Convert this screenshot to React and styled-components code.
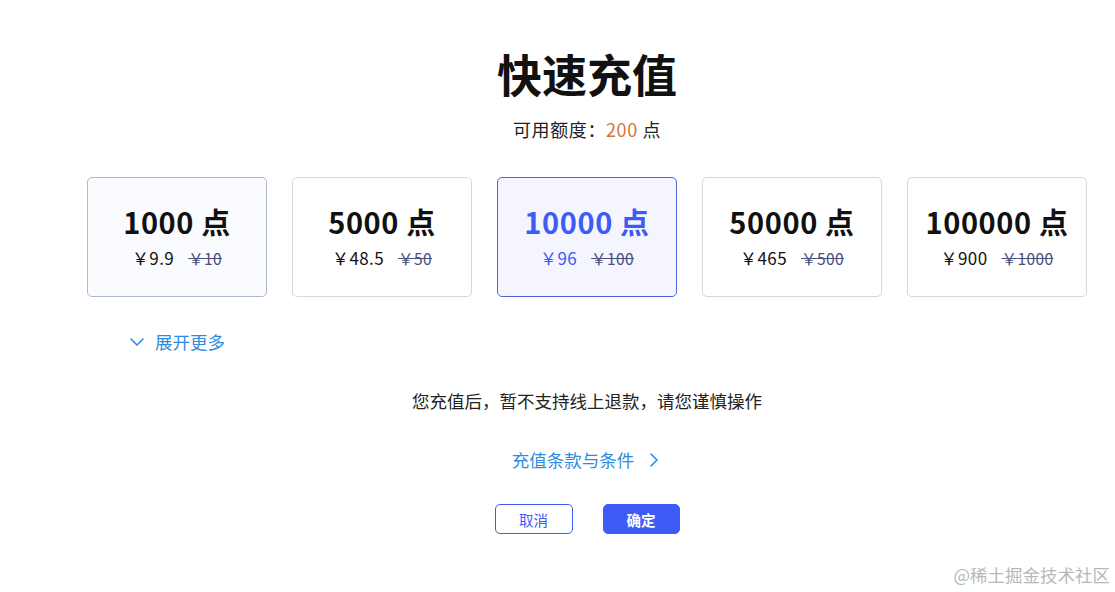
import React, { useState } from 'react'
import styled, { createGlobalStyle } from 'styled-components'

const GlobalStyle = createGlobalStyle`
  body {
    margin: 0;
    background: #fff;
    font-family: "Noto Sans CJK SC", "Noto Sans", sans-serif;
    color: #1a1a1a;
  }
`

const Page = styled.div`
  width: 1115px;
  height: 592px;
  position: relative;
  overflow: hidden;
`

const Content = styled.div`
  width: 1000px;
  margin-left: 87px;
  padding-top: 42px;
  display: flex;
  flex-direction: column;
  align-items: center;
`

const Title = styled.h1`
  margin: 0;
  font-size: 45px;
  line-height: 64px;
  font-weight: 700;
  color: #111;
`

const Balance = styled.div`
  margin-top: 10px;
  font-size: 18px;
  line-height: 26px;
  letter-spacing: 0.6px;
  color: #222;
  span {
    color: #d2753a;
  }
`

const CardRow = styled.div`
  margin-top: 35px;
  width: 100%;
  display: grid;
  grid-template-columns: repeat(5, 180px);
  justify-content: space-between;
`

const Card = styled.div`
  height: 120px;
  box-sizing: border-box;
  border: 1px solid ${(p) => (p.$active ? '#4d66d8' : p.$hover ? '#b0b6d0' : '#d8d8d8')};
  background: ${(p) => (p.$active ? '#f4f5ff' : p.$hover ? '#f9fbfe' : '#fff')};
  border-radius: 5px;
  display: flex;
  flex-direction: column;
  align-items: center;
  justify-content: center;
  color: ${(p) => (p.$active ? '#3d5bf5' : '#111')};
  cursor: pointer;
`

const Points = styled.div`
  font-size: 29px;
  font-weight: 700;
  line-height: 36px;
  letter-spacing: 0.6px;
  margin-top: -2px;
`

const PriceLine = styled.div`
  margin-top: 7px;
  display: flex;
  align-items: baseline;
  gap: 14px;
  font-size: 17px;
  line-height: 24px;
  letter-spacing: 0.4px;
`

const Old = styled.span`
  font-size: 15.5px;
  color: #4a4f80;
  text-decoration: line-through;
`

const More = styled.div`
  align-self: flex-start;
  margin-top: 33px;
  margin-left: 42px;
  display: flex;
  align-items: center;
  gap: 10px;
  font-size: 17.5px;
  line-height: 24px;
  color: #2f8be0;
  cursor: pointer;
`

const Notice = styled.div`
  margin-top: 35px;
  font-size: 17.5px;
  line-height: 24px;
  color: #222;
`

const Terms = styled.div`
  margin-top: 35px;
  display: flex;
  align-items: center;
  gap: 12px;
  font-size: 17.5px;
  line-height: 24px;
  color: #2f8be0;
  cursor: pointer;
`

const Buttons = styled.div`
  margin-top: 32px;
  display: flex;
  gap: 30px;
`

const Button = styled.button`
  width: ${(p) => (p.$primary ? '77px' : '78px')};
  height: 30px;
  border-radius: 5px;
  border: 1px solid #3d5bf5;
  background: ${(p) => (p.$primary ? '#3d5bf5' : '#fff')};
  color: ${(p) => (p.$primary ? '#fff' : '#3d5bf5')};
  font-family: inherit;
  font-size: 14.5px;
  font-weight: ${(p) => (p.$primary ? 700 : 400)};
  padding: 0;
  cursor: pointer;
`

const Watermark = styled.div`
  position: absolute;
  right: 5px;
  bottom: 5px;
  font-size: 17.5px;
  color: #b8b8b8;
`

const plans = [
  { points: 1000, price: '9.9', old: '10' },
  { points: 5000, price: '48.5', old: '50' },
  { points: 10000, price: '96', old: '100' },
  { points: 50000, price: '465', old: '500' },
  { points: 100000, price: '900', old: '1000' },
]

const Chevron = ({ dir }) => (
  <svg width="16" height="16" viewBox="0 0 16 16" fill="none" stroke="currentColor" strokeWidth="1.6" strokeLinecap="round" strokeLinejoin="round">
    {dir === 'down' ? <path d="M2 5 L8 11 L14 5" /> : <path d="M5 2 L11 8 L5 14" />}
  </svg>
)

const App = () => {
  const [selected, setSelected] = useState(2)

  return (
    <Page>
      <GlobalStyle />
      <Content>
        <Title>快速充值</Title>
        <Balance>可用额度：<span>200</span> 点</Balance>
        <CardRow>
          {plans.map((plan, i) => (
            <Card key={plan.points} $active={selected === i} $hover={i === 0} onClick={() => setSelected(i)}>
              <Points>{plan.points} 点</Points>
              <PriceLine>
                <span>￥{plan.price}</span>
                <Old>￥{plan.old}</Old>
              </PriceLine>
            </Card>
          ))}
        </CardRow>
        <More>
          <Chevron dir="down" />
          展开更多
        </More>
        <Notice>您充值后，暂不支持线上退款，请您谨慎操作</Notice>
        <Terms>
          充值条款与条件
          <Chevron dir="right" />
        </Terms>
        <Buttons>
          <Button>取消</Button>
          <Button $primary>确定</Button>
        </Buttons>
      </Content>
      <Watermark>@稀土掘金技术社区</Watermark>
    </Page>
  )
}

export default App
